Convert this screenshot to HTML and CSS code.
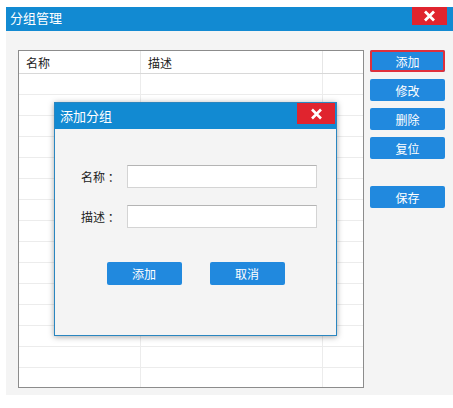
FILE: index.html
```html
<!DOCTYPE html>
<html lang="zh-CN">
<head>
  <meta charset="UTF-8">
  <title>分组管理</title>
  <link rel="stylesheet" href="styles.css">
</head>
<body>
  <div class="window">
    <div class="titlebar">
      <span class="title">分组管理</span>
      <button class="close">
        <svg width="13" height="12" viewBox="0 0 13 12"><path d="M2 1.5L11 10.5M11 1.5L2 10.5" stroke="#fff" stroke-width="2.8"/></svg>
      </button>
    </div>
    <div class="content">
      <div class="grid">
        <table>
          <thead>
            <tr><th class="c-name">名称</th><th class="c-desc">描述</th><th></th></tr>
          </thead>
          <tbody id="rows"></tbody>
        </table>
      </div>
      <div class="actions">
        <button class="btn active">添加</button>
        <button class="btn">修改</button>
        <button class="btn">删除</button>
        <button class="btn">复位</button>
        <button class="btn save">保存</button>
      </div>
    </div>
  </div>

  <div class="dialog">
    <div class="titlebar small">
      <span class="title">添加分组</span>
      <button class="close">
        <svg width="13" height="12" viewBox="0 0 13 12"><path d="M2 1.5L11 10.5M11 1.5L2 10.5" stroke="#fff" stroke-width="2.6"/></svg>
      </button>
    </div>
    <div class="dialog-body">
      <div class="field">
        <label>名称 ：</label>
        <input type="text">
      </div>
      <div class="field">
        <label>描述 ：</label>
        <input type="text">
      </div>
      <div class="dialog-buttons">
        <button class="btn wide">添加</button>
        <button class="btn wide">取消</button>
      </div>
    </div>
  </div>

  <script>
    // empty rows so the grid lines fill the table
    const rows = document.getElementById('rows');
    for (let i = 0; i < 15; i++) {
      const tr = document.createElement('tr');
      tr.innerHTML = '<td></td><td></td><td></td>';
      rows.appendChild(tr);
    }
  </script>
</body>
</html>
```

FILE: styles.css
```css
body {
  margin: 0;
  background-color: #fff;
  font-family: "Noto Sans CJK SC", "Liberation Sans", sans-serif;
  font-size: 12px;
  color: #222;
}

button {
  font-family: inherit;
  cursor: pointer;
}

.window {
  margin: 7px 0 0 6px;
  width: 447px;
}

.titlebar {
  display: flex;
  justify-content: space-between;
  align-items: flex-start;
  height: 24px;
  background-color: #128ad2;
}

.titlebar .title {
  color: #fff;
  font-size: 13px;
  line-height: 22px;
  padding-left: 4px;
}

.close {
  display: flex;
  align-items: center;
  justify-content: center;
  width: 35px;
  height: 18px;
  margin-right: 6px;
  padding: 0;
  border: none;
  background-color: #e0242e;
}

.content {
  display: flex;
  gap: 6px;
  height: 364px;
  padding: 19px 0 0 12px;
  box-sizing: border-box;
  background-color: #f4f4f4;
}

.grid {
  width: 346px;
  height: 338px;
  box-sizing: border-box;
  border: 1px solid #8c8c8c;
  background-color: #fff;
  overflow: hidden;
}

table {
  width: 100%;
  border-collapse: collapse;
  table-layout: fixed;
}

th {
  height: 22px;
  padding: 0 0 0 7px;
  text-align: left;
  font-weight: normal;
  color: #222;
  border-bottom: 1px solid #d8d8d8;
  border-right: 1px solid #e6e6e6;
}

th:last-child,
td:last-child {
  border-right: none;
}

.c-name {
  width: 114px;
}

.c-desc {
  width: 174px;
}

td {
  height: 20px;
  padding: 0;
  border-bottom: 1px solid #ececec;
  border-right: 1px solid #ececec;
}

.actions {
  display: flex;
  flex-direction: column;
  gap: 7px;
}

.btn {
  width: 75px;
  height: 22px;
  padding: 0;
  border: none;
  border-radius: 2px;
  background-color: #2189de;
  color: #fff;
  font-size: 12px;
}

.btn.active {
  outline: 2px solid #e0303c;
  outline-offset: -2px;
}

.btn.save {
  margin-top: 20px;
}

.dialog {
  position: absolute;
  left: 54px;
  top: 102px;
  width: 283px;
  height: 234px;
  box-sizing: border-box;
  border: 1px solid #2a86c0;
  background-color: #f4f4f4;
  box-shadow: 0 1px 6px rgba(0, 0, 0, 0.35);
}

.titlebar.small {
  height: 26px;
}

.titlebar.small .title {
  padding-left: 5px;
  line-height: 26px;
}

.titlebar.small .close {
  width: 38px;
  height: 21px;
  margin: 0 1px 0 0;
}

.dialog-body {
  padding: 36px 0 0 0;
}

.field {
  display: flex;
  align-items: center;
  height: 23px;
  margin-bottom: 17px;
}

.field label {
  width: 46px;
  padding-left: 26px;
  white-space: nowrap;
  color: #222;
}

.field input {
  width: 190px;
  height: 23px;
  margin-left: 0;
  box-sizing: border-box;
  border: 1px solid #d4d4d4;
  border-top-color: #b4b4b4;
  background-color: #fff;
}

.dialog-buttons {
  display: flex;
  justify-content: center;
  gap: 28px;
  margin-top: 34px;
}

.btn.wide {
  height: 23px;
}
```
